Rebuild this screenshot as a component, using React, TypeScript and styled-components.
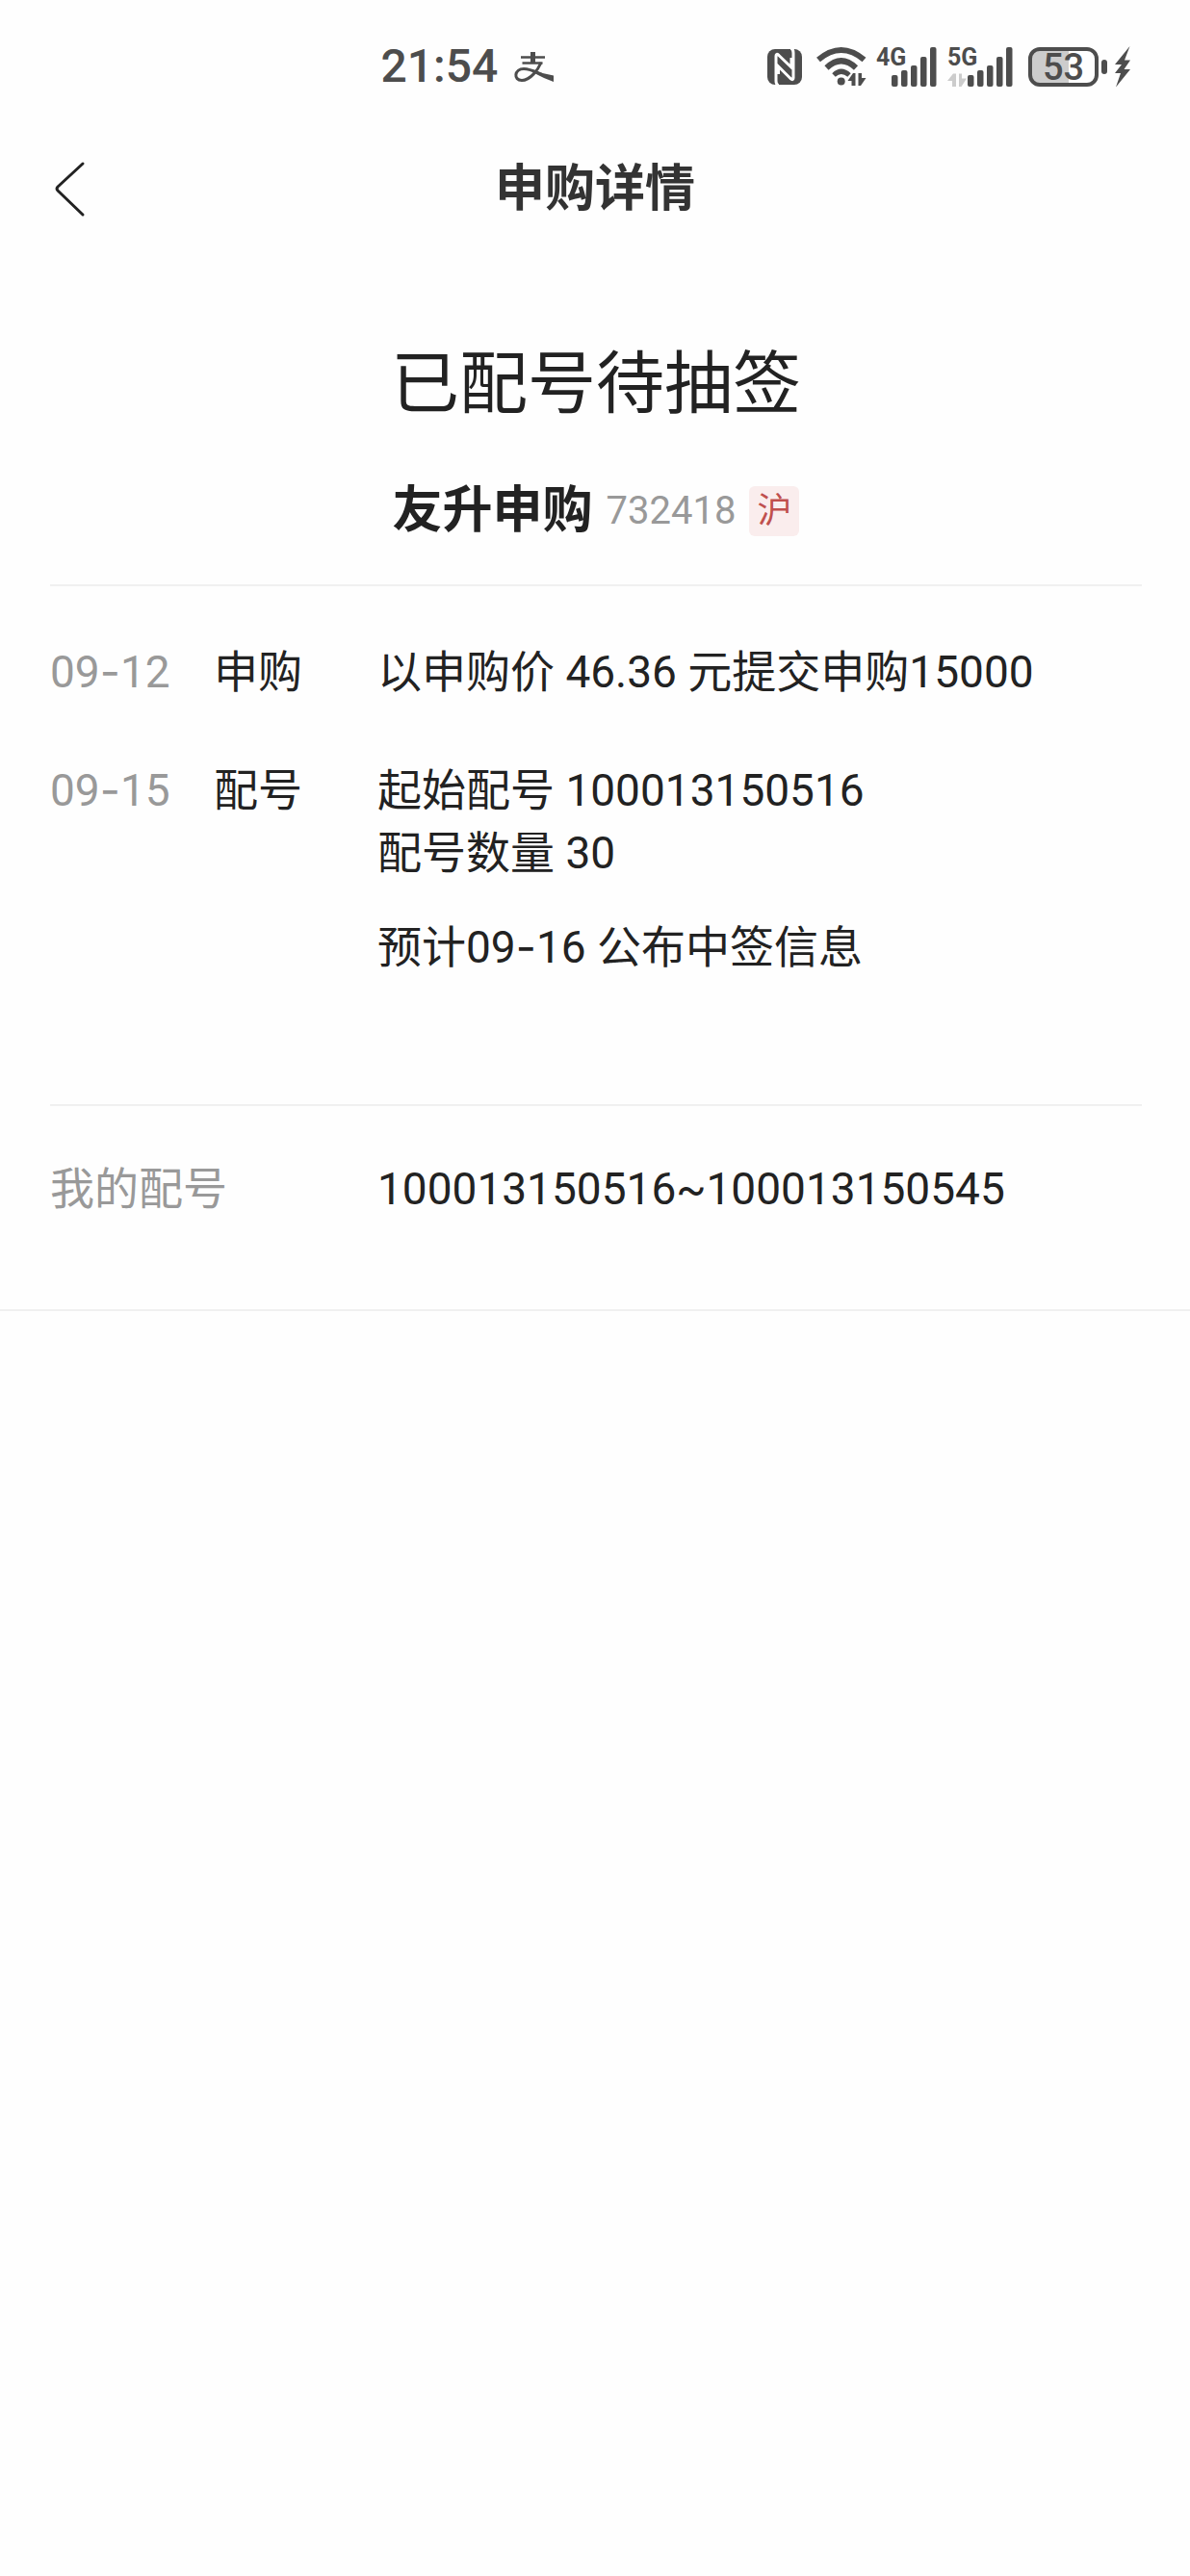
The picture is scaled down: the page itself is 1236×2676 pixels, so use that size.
import React from 'react';
import styled, { createGlobalStyle } from 'styled-components';

const ink = '#4d4d4d';

const GlobalStyle = createGlobalStyle`
  * { box-sizing: border-box; }
  body {
    margin: 0;
    background: #fefefe;
    color: #222;
    font-family: Roboto, "Noto Sans CJK SC", sans-serif;
  }
  h1, h2, p, dl, dd, dt, ol { margin: 0; padding: 0; font-weight: 400; }
  svg { display: block; flex: none; }
`;

const Page = styled.div`
  min-height: 100vh;
  background: #fefefe;
`;

const StatusBar = styled.div`
  display: flex;
  justify-content: space-between;
  align-items: center;
  height: 137px;
  padding: 0 62px 0 32%;
  color: ${ink};
`;

const StatusGroup = styled.div<{ $gap: number }>`
  display: flex;
  align-items: center;
  gap: ${(p) => p.$gap}px;
`;

const Clock = styled.time`
  font-size: 48px;
  line-height: 56px;
  font-weight: 500;
`;

const NavBar = styled.header`
  display: grid;
  grid-template-columns: 1fr auto 1fr;
  align-items: center;
  height: 120px;
  padding: 0 52px;
`;

const BackButton = styled.button`
  justify-self: start;
  display: flex;
  padding: 0;
  border: 0;
  background: none;
`;

const NavTitle = styled.h1`
  color: #333;
  font-size: 52px;
  line-height: 72px;
  font-weight: 700;
`;

const Hero = styled.section`
  display: flex;
  flex-direction: column;
  align-items: center;
  gap: 54px;
  margin: 0 50px 0 52px;
  padding: 90px 0 50px;
  border-bottom: 2px solid #f0f0f0;
`;

const Headline = styled.h2`
  font-size: 71px;
  line-height: 104px;
`;

const Stock = styled.div`
  display: flex;
  align-items: center;
  gap: 14px;
  height: 52px;
`;

const StockName = styled.strong`
  font-size: 52px;
  line-height: 52px;
  font-weight: 700;
`;

const StockCode = styled.span`
  color: #999;
  font-size: 40px;
  line-height: 52px;
`;

const Market = styled.span`
  width: 52px;
  height: 52px;
  border-radius: 6px;
  background: #faeded;
  color: #c0504d;
  font-size: 36px;
  line-height: 52px;
  text-align: center;
`;

const Timeline = styled.ol`
  display: flex;
  flex-direction: column;
  gap: 58px;
  margin: 0 50px 0 52px;
  padding: 57px 0 130px;
  border-bottom: 2px solid #f0f0f0;
  list-style: none;
`;

const Step = styled.li`
  display: grid;
  grid-template-columns: 170px 170px 1fr;
  font-size: 46px;
  line-height: 65px;
`;

const StepDate = styled.time`
  color: #999;
`;

const Dash = styled.span`
  font-family: Inter, sans-serif;
  line-height: 1;
`;

const Forecast = styled.p`
  margin-top: 33px;
`;

const Numbers = styled.dl`
  display: grid;
  grid-template-columns: 340px 1fr;
  padding: 54px 50px 92px 52px;
  border-bottom: 2px solid #f0f0f0;
  font-size: 46px;
  line-height: 65px;
`;

const NumbersLabel = styled.dt`
  color: #999;
`;

const ShortDate = ({ value }: { value: string }) => {
  const [month, day] = value.split('-');
  return <>{month}<Dash>-</Dash>{day}</>;
};

const AlipayIcon = () => (
  <svg width="44" height="44" viewBox="0 0 44 44" fill="none" stroke={ink} aria-hidden="true">
    <path d="M8 12.5h25M9.500 18.500h21" strokeWidth="2.500" />
    <path d="M20.500 7v11" strokeWidth="5" />
    <path d="M29 18C26 25 18 36.500 9 36.500C0 36.500 1 24.500 11 24.500C18 24.500 24 28 30 30.500" strokeWidth="3" />
    <path d="M20 25.500Q30 29.500 42 31.500V38Q32 34.500 21 28.500z" fill={ink} stroke="none" />
  </svg>
);

const NfcIcon = () => (
  <svg width="44" height="44" viewBox="0 0 44 44" aria-hidden="true">
    <rect x="1" y="4" width="36" height="37" rx="8" fill={ink} />
    <path
      d="M12.500 42Q10 41 10 37V11Q10 8 13 10.500L26 23V13M25.500 3Q28 4 28 8V34Q28 37 25 34.500L12.500 22V30"
      fill="none"
      stroke="#fefefe"
      strokeWidth="3"
    />
  </svg>
);

const WifiIcon = () => (
  <svg width="54" height="44" viewBox="0 0 54 44" fill="none" stroke={ink} strokeWidth="6" aria-hidden="true">
    <path d="M2 15Q25.700 -5 49.500 15" />
    <path d="M10.500 23.500Q25.700 9 41 23.500" />
    <path d="M18 31Q25.700 23.500 34 31" strokeWidth="5" />
    <circle cx="25.700" cy="37.500" r="4" fill={ink} stroke="none" />
    <path d="M32.500 37L38 29h2.500v13h-4v-5zM43.500 29h3.500v5h4.500L46 42h-2.500z" fill={ink} stroke="none" />
  </svg>
);

const bars = [31, 26, 21, 12, 2];

const Signal = ({ label, start, width, idle }: { label: string; start: number; width: number; idle?: boolean }) => (
  <svg width={width} height="64" viewBox={`0 -10 ${width} 64`} fill={ink} role="img" aria-label={label}>
    {bars.map((top, i) => (
      <rect key={top} x={start + i * 10} y={top} width="6.500" height={43 - top} rx="2" />
    ))}
    {idle && <path d="M0 37L6 29.500h3V43H5v-6zM12 29.500h3v5h5L14.500 43H12z" fill="#ccc" />}
    <text x="0" y="21" fontSize="25" fontWeight="700" fontFamily="Roboto, sans-serif">{label}</text>
  </svg>
);

const BatteryIcon = ({ level }: { level: number }) => (
  <svg width="82" height="44" viewBox="0 0 82 44" role="img" aria-label={`${level}%`}>
    <path d="M12 4H42V41H12Q3 41 3 32V13Q3 4 12 4z" fill="#ccc" />
    <rect x="2" y="4" width="69" height="37" rx="10" fill="none" stroke={ink} strokeWidth="4" />
    <rect x="76" y="15" width="6" height="15" rx="3" fill={ink} />
    <text x="36.500" y="36" fontSize="38" fontWeight="500" fontFamily="Roboto, sans-serif" textAnchor="middle" fill={ink}>
      {level}
    </text>
  </svg>
);

const BoltIcon = () => (
  <svg width="16" height="44" viewBox="0 0 16 44" fill={ink} aria-hidden="true">
    <path d="M15.500 1L0 20h7L0 29h6L1 43.500L16 25H9.500L16 15.500H10z" />
  </svg>
);

export default function App() {
  return (
    <Page>
      <GlobalStyle />
      <StatusBar>
        <StatusGroup $gap={16}>
          <Clock>21:54</Clock>
          <AlipayIcon />
        </StatusGroup>
        <StatusGroup $gap={8}>
          <NfcIcon />
          <WifiIcon />
          <Signal label="4G" start={16} width={66} />
          <Signal label="5G" start={21} width={76} idle />
          <BatteryIcon level={53} />
          <BoltIcon />
        </StatusGroup>
      </StatusBar>
      <NavBar>
        <BackButton type="button" aria-label="返回">
          <svg width="40" height="60" viewBox="0 0 40 60" fill="none" stroke="#222" strokeWidth="3" strokeLinecap="round" strokeLinejoin="round">
            <path d="M34 3L8 27Q6 29 8 31L34 56" />
          </svg>
        </BackButton>
        <NavTitle>申购详情</NavTitle>
      </NavBar>
      <main>
        <Hero>
          <Headline>已配号待抽签</Headline>
          <Stock>
            <StockName>友升申购</StockName>
            <StockCode>732418</StockCode>
            <Market>沪</Market>
          </Stock>
        </Hero>
        <Timeline>
          <Step>
            <StepDate><ShortDate value="09-12" /></StepDate>
            <span>申购</span>
            <p>以申购价 46.36 元提交申购15000</p>
          </Step>
          <Step>
            <StepDate><ShortDate value="09-15" /></StepDate>
            <span>配号</span>
            <div>
              <p>起始配号 100013150516</p>
              <p>配号数量 30</p>
              <Forecast>预计<ShortDate value="09-16" /> 公布中签信息</Forecast>
            </div>
          </Step>
        </Timeline>
        <Numbers>
          <NumbersLabel>我的配号</NumbersLabel>
          <dd>100013150516~100013150545</dd>
        </Numbers>
      </main>
    </Page>
  );
}
